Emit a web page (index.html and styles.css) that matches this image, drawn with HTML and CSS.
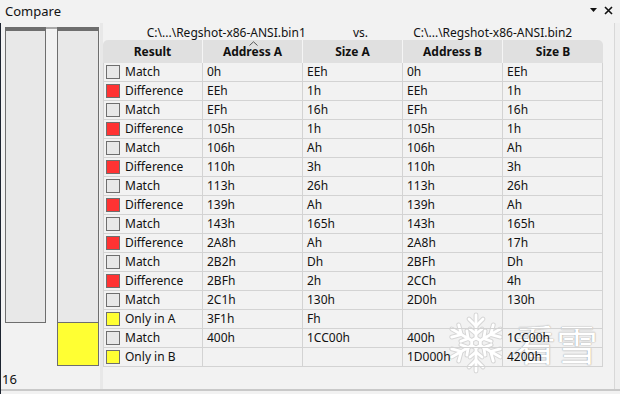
FILE: index.html
```html
<!DOCTYPE html>
<html lang="en">
<head>
    <meta charset="UTF-8">
    <title>Compare</title>
    <link rel="stylesheet" href="styles.css">
</head>
<body>
<div class="window">
    <div class="titlebar">
        <span class="title">Compare</span>
        <span class="controls">
            <svg class="ctl-menu" width="8" height="5" viewBox="0 0 8 5"><polygon points="0,0 7,0 3.5,4" fill="#111"/></svg>
            <svg class="ctl-close" width="9" height="9" viewBox="0 0 9 9"><path d="M1 1L8 8M8 1L1 8" stroke="#111" stroke-width="1.6"/></svg>
        </span>
    </div>
    <div class="frame">
        <div class="body">
            <!-- overview strip on the left -->
            <div class="overview">
                <div class="bars">
                    <div class="bar bar-a"></div>
                    <div class="link"></div>
                    <div class="bar-b">
                        <div class="seg seg-gray"></div>
                        <div class="seg seg-yellow"></div>
                    </div>
                </div>
                <div class="count">16</div>
            </div>
            <div class="divider"></div>
            <div class="main">
                <!-- watermark, drawn under the list -->
                <div class="watermark">
                    <svg class="flake" width="56" height="62" viewBox="-28 -31 56 62">
                        <g id="flakeArms" fill="none" stroke-linecap="round">
                            <g class="arm"><line x1="0" y1="-5" x2="0" y2="-28"/><polyline points="-7,-24 0,-17 7,-24"/><polyline points="-6,-14 0,-9 6,-14"/></g>
                            <g class="arm" transform="rotate(60)"><line x1="0" y1="-5" x2="0" y2="-28"/><polyline points="-7,-24 0,-17 7,-24"/><polyline points="-6,-14 0,-9 6,-14"/></g>
                            <g class="arm" transform="rotate(120)"><line x1="0" y1="-5" x2="0" y2="-28"/><polyline points="-7,-24 0,-17 7,-24"/><polyline points="-6,-14 0,-9 6,-14"/></g>
                            <g class="arm" transform="rotate(180)"><line x1="0" y1="-5" x2="0" y2="-28"/><polyline points="-7,-24 0,-17 7,-24"/><polyline points="-6,-14 0,-9 6,-14"/></g>
                            <g class="arm" transform="rotate(240)"><line x1="0" y1="-5" x2="0" y2="-28"/><polyline points="-7,-24 0,-17 7,-24"/><polyline points="-6,-14 0,-9 6,-14"/></g>
                            <g class="arm" transform="rotate(300)"><line x1="0" y1="-5" x2="0" y2="-28"/><polyline points="-7,-24 0,-17 7,-24"/><polyline points="-6,-14 0,-9 6,-14"/></g>
                            <polygon points="0,-5 4.3,-2.5 4.3,2.5 0,5 -4.3,2.5 -4.3,-2.5"/>
                        </g>
                    </svg>
                    <span class="wm-text">看雪</span>
                </div>
                <div class="files">
                    <span class="file1">C:\...\Regshot-x86-ANSI.bin1</span>
                    <span class="vs">vs.</span>
                    <span class="file2">C:\...\Regshot-x86-ANSI.bin2</span>
                </div>
                <div class="grid">
                    <div class="head">
                        <div class="th">Result</div>
                        <div class="th sorted">
                            <svg class="sort" width="9" height="5" viewBox="0 0 9 5"><polyline points="0.5,4.5 4.5,0.8 8.5,4.5" fill="none" stroke="#555" stroke-width="1"/></svg>
                            Address A
                        </div>
                        <div class="th">Size A</div>
                        <div class="th">Address B</div>
                        <div class="th">Size B</div>
                    </div>
                    <div id="rows"></div>
                </div>
            </div>
            <div class="edge"></div>
        </div>
        <div class="statusline"></div>
    </div>
</div>

<script>
    var data = [
        ["m", "Match", "0h", "EEh", "0h", "EEh"],
        ["d", "Difference", "EEh", "1h", "EEh", "1h"],
        ["m", "Match", "EFh", "16h", "EFh", "16h"],
        ["d", "Difference", "105h", "1h", "105h", "1h"],
        ["m", "Match", "106h", "Ah", "106h", "Ah"],
        ["d", "Difference", "110h", "3h", "110h", "3h"],
        ["m", "Match", "113h", "26h", "113h", "26h"],
        ["d", "Difference", "139h", "Ah", "139h", "Ah"],
        ["m", "Match", "143h", "165h", "143h", "165h"],
        ["d", "Difference", "2A8h", "Ah", "2A8h", "17h"],
        ["m", "Match", "2B2h", "Dh", "2BFh", "Dh"],
        ["d", "Difference", "2BFh", "2h", "2CCh", "4h"],
        ["m", "Match", "2C1h", "130h", "2D0h", "130h"],
        ["o", "Only in A", "3F1h", "Fh", "", ""],
        ["m", "Match", "400h", "1CC00h", "400h", "1CC00h"],
        ["o", "Only in B", "", "", "1D000h", "4200h"]
    ]

    var rows = document.getElementById("rows")
    data.forEach(function (r) {
        var row = document.createElement("div")
        row.className = "row"
        var first = document.createElement("div")
        first.className = "td result"
        first.innerHTML = '<span class="swatch sw-' + r[0] + '"></span>' + r[1]
        row.appendChild(first)
        for (var i = 2; i < r.length; i++) {
            var td = document.createElement("div")
            td.className = "td"
            td.innerText = r[i]
            row.appendChild(td)
        }
        rows.appendChild(row)
    })

    // white strokes over a faint grey edge
    var arms = document.getElementById("flakeArms")
    var under = arms.cloneNode(true)
    under.removeAttribute("id")
    under.setAttribute("class", "flake-under")
    arms.setAttribute("class", "flake-over")
    arms.parentNode.insertBefore(under, arms)
</script>
</body>
</html>
```

FILE: styles.css
```css
body {
    margin: 0;
    background: #f2f2f2;
    font-family: "Noto Sans", "Noto Sans CJK SC", sans-serif;
    font-size: 12px;
    color: #111;
}

.window {
    width: 620px;
    height: 394px;
    display: flex;
    flex-direction: column;
    overflow: hidden;
}

.titlebar {
    height: 23px;
    display: flex;
    align-items: center;
    justify-content: space-between;
    padding: 0 7px 0 5px;
}
.title {
    font-size: 13px;
    line-height: 23px;
}
.controls {
    display: flex;
    align-items: center;
    gap: 6px;
    margin-top: -2px;
}

.frame {
    flex: 1;
    display: flex;
    flex-direction: column;
    border-left: 1px solid #1d2430;
}
.body {
    height: 366px;
    display: flex;
}
.statusline {
    flex: 1;
    border-top: 2px solid #c9c9c9;
}

/* overview */
.overview {
    width: 99px;
    display: flex;
    flex-direction: column;
}
.bars {
    display: flex;
    align-items: flex-start;
    padding: 4px 0 0 4px;
}
.bar {
    width: 41px;
    height: 296px;
    box-sizing: border-box;
    border: 1px solid #6e6e6e;
    border-top: 4px solid #6e6e6e;
    background: #e8e8e8;
}
.link {
    width: 11px;
    height: 2px;
    background: #a8a8a8;
}
.bar-b {
    width: 42px;
    display: flex;
    flex-direction: column;
}
.seg {
    box-sizing: border-box;
    border: 1px solid #6e6e6e;
}
.seg-gray {
    height: 296px;
    border-top: 4px solid #6e6e6e;
    background: #e8e8e8;
}
.seg-yellow {
    height: 43px;
    border-top: 0;
    background: #ffff33;
}
.count {
    margin-top: auto;
    padding-left: 1px;
    font-size: 13px;
    line-height: 17px;
    margin-bottom: 1px;
}

.divider {
    width: 3px;
    background: #e8e8e8;
}

/* list */
.main {
    width: 511px;
    position: relative;
}
.files {
    height: 15px;
    padding-top: 2px;
    display: flex;
    line-height: 15px;
    white-space: nowrap;
}
.file1 {
    width: 248px;
    text-align: center;
}
.vs {
    width: 22px;
    text-align: center;
}
.file2 {
    width: 244px;
    text-align: center;
}

.grid {
    position: relative;
    z-index: 1;
    width: 500px;
}
.head {
    display: grid;
    grid-template-columns: repeat(5, 100px);
    height: 23px;
}
.th {
    position: relative;
    background: #e0e0e0;
    border-right: 1px solid #f5f5f5;
    font-weight: bold;
    text-align: center;
    line-height: 23px;
}
.th:first-child {
    border-top-left-radius: 5px;
}
.th:last-child {
    border-right: 0;
    border-top-right-radius: 5px;
}
.sort {
    position: absolute;
    left: 46px;
    top: 1px;
}

.row {
    display: grid;
    grid-template-columns: 99px repeat(4, 100px);
    border-left: 1px solid #d3d3d3;
    height: 19px;
}
.td {
    box-sizing: border-box;
    height: 19px;
    border-right: 1px solid #d3d3d3;
    border-bottom: 1px solid #d3d3d3;
    padding-left: 4px;
    line-height: 18px;
    white-space: nowrap;
}
.result {
    display: flex;
    align-items: center;
    gap: 5px;
    padding-left: 2px;
}
.swatch {
    width: 14px;
    height: 14px;
    box-sizing: border-box;
    border: 1px solid #6e6e6e;
    flex-shrink: 0;
}
.sw-m {
    background: #e8e8e8;
}
.sw-d {
    background: #ff3333;
}
.sw-o {
    background: #ffff33;
}

.edge {
    flex: 1;
    border-left: 1px solid #d8d8d8;
    background: #efefef;
}

/* watermark */
.watermark {
    position: absolute;
    z-index: 0;
    left: 345px;
    top: 289px;
    display: flex;
    align-items: center;
    gap: 10px;
    pointer-events: none;
}
.flake-under {
    stroke: #d6d6d6;
    stroke-width: 4.8;
}
.flake-over {
    stroke: #ffffff;
    stroke-width: 2.8;
}
.wm-text {
    font-family: "Noto Sans CJK SC", sans-serif;
    font-size: 42px;
    line-height: 50px;
    color: #ffffff;
    text-shadow: 0 0 1px rgba(0, 0, 0, 0.4), 0 0 2px rgba(0, 0, 0, 0.18);
}
```
